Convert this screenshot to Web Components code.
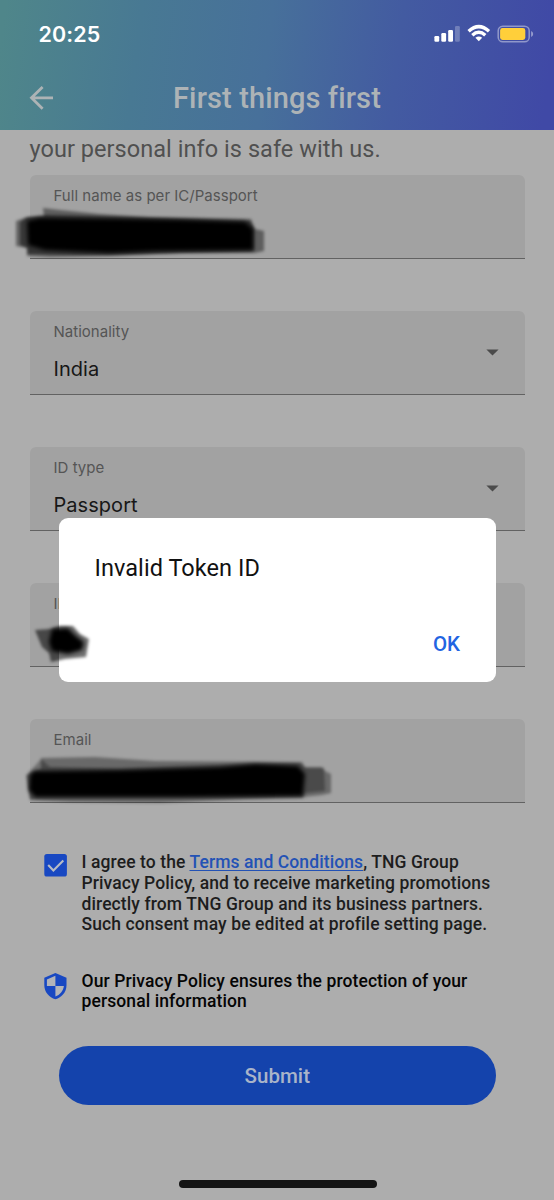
<!DOCTYPE html>
<html lang="en">
<head>
<meta charset="utf-8">
<title>First things first</title>
<style>
html,body{margin:0;padding:0;background:#adadad}
body{width:554px;height:1200px;overflow:hidden;font-family:Roboto,"Liberation Sans",sans-serif}
</style>
</head>
<body>
<registration-page></registration-page>
<script>
const define = (name, html) => customElements.define(name, class extends HTMLElement {
  constructor() {
    super();
    const t = document.createElement('template');
    t.innerHTML = html;
    this.attachShadow({mode: 'open'}).append(t.content.cloneNode(true));
  }
});

define('status-bar', `<style>
:host{display:flex;height:68px;box-sizing:border-box;padding:0 20px 0 38.5px;justify-content:space-between;align-items:center;color:#fff;font:600 21.5px/28px Inter,sans-serif}
.time{letter-spacing:.1px}
svg{display:block}
</style>
<span class="time">20:25</span>
<svg width="100" height="20" viewBox="0 0 100 20">
<g fill="#fff"><rect x="0.4" y="12" width="4.8" height="5.8" rx="1.2"/><rect x="7.3" y="9" width="4.8" height="8.8" rx="1.2"/><rect x="14.2" y="6" width="4.8" height="11.8" rx="1.2"/><rect x="21" y="2" width="4.8" height="15.8" rx="1.2" opacity=".25"/></g>
<g fill="none" stroke="#fff" stroke-width="3.4"><path d="M34.6 7.2Q44.8-2 55 7.2"/><path d="M38.3 11.2Q44.8 5.3 51.3 11.2"/></g><path fill="#fff" d="M41.4 13.8Q44.8 11 48.2 13.8L44.8 17.3Z"/>
<rect x="64.2" y="2.2" width="31" height="15.6" rx="4.6" fill="none" stroke="#fff" stroke-opacity=".42" stroke-width="1.5"/><rect x="66.1" y="4.1" width="25.2" height="11.8" rx="2.4" fill="#ffcf3a"/><path d="M97.1 7.1Q99.2 8 99.2 10T97.1 12.9Z" fill="#fff" opacity=".45"/>
</svg>`);

define('app-header', `<style>
:host{display:block;height:130px;background:linear-gradient(97deg,#4f868a 1%,#487993 25%,#47709a 48%,#435ba1 71%,#4049a6 98%)}
.bar{display:grid;grid-template-columns:52px 1fr 52px;align-items:center;height:60px;padding:0 1px}
svg{display:block;justify-self:end}
h1{margin:0;text-align:center;font-weight:500;font-size:29px;line-height:36px;letter-spacing:.12px;color:#adb3b6}
</style>
<status-bar></status-bar>
<div class="bar"><svg width="24" height="26" viewBox="0 0 24 26" fill="none" stroke="#adb3b5" stroke-width="2.8"><path d="M24 12.8H2.5M13.6 1.9 2.5 12.8 13.6 23.8"/></svg>
<h1><slot></slot></h1></div>`);

define('form-field', `<style>
:host{display:grid;grid-template-columns:1fr auto;box-sizing:border-box;height:84px;margin-bottom:52px;padding:11px 26px 0 24px;background:#a2a2a2;border-bottom:1.5px solid #626262;border-radius:6px 6px 0 0;font-family:Inter,sans-serif}
.label{font-size:15px;line-height:20px;letter-spacing:.02px;color:#555;white-space:nowrap}
.value{margin-top:14px;height:26px;font-size:20px;line-height:26px;letter-spacing:.05px;color:#171717}
.arrow{display:none;align-self:start;margin-top:26.5px}
:host([select]) .arrow{display:block}
</style>
<div><div class="label"><slot name="label"></slot></div><div class="value"><slot></slot></div></div>
<svg class="arrow" width="13" height="7" viewBox="0 0 13 7"><path d="M.4.4h12.2L6.5 6.6Z" fill="#4b4b4b"/></svg>`);

define('check-box', `<style>:host{display:block}svg{display:block}</style>
<svg width="24" height="24" viewBox="0 0 24 24"><rect x=".3" y="0" width="22.6" height="22.6" rx="2.6" fill="#1848c2"/><path d="M4.2 11 9.4 16.4 19.3 6.4" fill="none" stroke="#b7bcc5" stroke-width="2.1"/></svg>`);

define('shield-icon', `<style>:host{display:block}svg{display:block}</style>
<svg width="24" height="28" viewBox="0 0.6 24 28"><path fill="#1848c2" d="M11.4.6.3 5.4v7.3c0 6.9 4.7 12.7 11.1 14.1 6.4-1.4 11.1-7.2 11.1-14.1V5.4Z"/><path fill="#b2b4b9" d="M11.4 3.3V13.7H2.9V7Z M11.4 13.7h8.5c-.6 4.8-4 9.1-8.5 10.5Z"/></svg>`);

define('consent-row', `<style>
:host{display:grid;grid-template-columns:24px 1fr;column-gap:13.5px;padding-left:44px;font-weight:500;font-size:17.5px;line-height:20.8px;letter-spacing:.095px;color:#1d1d1d;white-space:nowrap}
::slotted([slot=icon]){margin-top:2px}
</style><slot name="icon"></slot><div><slot></slot></div>`);

define('pill-button', `<style>
:host{display:flex;align-items:center;justify-content:center;height:59px;border-radius:30px;background:#1443ac;color:#a9b4c9;font-size:20.5px;font-weight:500;letter-spacing:.05px}
</style><slot></slot>`);

define('alert-dialog', `<style>
:host{position:absolute;left:59px;top:518px;width:436.5px;height:164px;box-sizing:border-box;padding:35px 35.5px 0;background:#fff;border-radius:9px;color:#111}
.message{font-size:23.5px;line-height:31px;letter-spacing:.06px}
.actions{display:flex;justify-content:flex-end;margin-top:46px;color:#2264e2;font-weight:500;font-size:20.5px;line-height:28px}
</style><div class="message"><slot></slot></div><div class="actions"><slot name="action"></slot></div>`);

define('marker-strokes', `<style>:host{position:absolute;inset:0;pointer-events:none}svg{display:block}</style>
<svg width="554" height="1200" viewBox="0 0 554 1200">
<defs><filter id="s" x="-5%" y="-15%" width="110%" height="130%"><feGaussianBlur stdDeviation="1.5"/></filter><filter id="h" x="-10%" y="-20%" width="120%" height="140%"><feGaussianBlur stdDeviation="2.1"/></filter></defs>
<g filter="url(#s)">
<path d="M43 208 60 210 100 214 150 217 251 219 255 229 264 231V251L255 253 180 253 110 256 50 257 27 256V248L16 246V221L27 217 44 217Z" fill="#000" opacity=".42"/>
<path d="M27 217 45 215 250 221 254 229V251L150 254 80 255 27 254V248L20 245V222Z" fill="#000" opacity=".45"/>
<path d="M41 758 95 757 155 761 302 762 305 767 322 767 325 771 331 774V793L322 795 303 797 245 799 160 803 70 802 30 800 26 775 41 769Z" fill="#000" opacity=".35"/>
<path d="M41 759 50 767 120 769 220 765 300 763 306 768 324 768 325 791 304 793 303 798 30 799 27 775Z" fill="#000" opacity=".3"/>
<path d="M35 630 50 629 60 626 73 626 80 634 89 639 86 657 65 659 51 662 49 653 42 647Z" fill="#000" opacity=".56"/>
</g>
<g filter="url(#h)" fill="#000">
<path d="M27 221 40 218 120 219 180 220 245 222 253 229 253 250 155 251 110 253 45 250 28 245Z"/>
<path d="M34 771 120 770 220 767 255 764 298 766 305 774 303 796 180 797 35 797 29 790 30 775Z"/>
<path d="M52 629 68 628 76 636 84 642 82 650 68 654 52 651 49 642Z"/>
</g></svg>`);

define('registration-page', `<style>
:host{display:block;position:relative;width:554px;height:1200px;overflow:hidden;background:#adadad}
main{display:flex;flex-direction:column}
.intro{margin:4px 0 0 29.5px;height:41px;font-size:23.5px;line-height:30px;letter-spacing:.05px;color:#505050;white-space:nowrap}
.fields{padding:0 29px 0 29.5px}
.terms{margin-top:-3px}
a{color:#2352b5;text-decoration:underline;text-decoration-thickness:1.3px;text-underline-offset:2px}
.privacy{margin-top:35.5px;color:#050505}
pill-button{margin:34px 58.5px 0 59px}
.home{width:198px;height:8px;border-radius:4px;background:#141414;margin:75px 0 0 178.5px}
</style>
<app-header>First things first</app-header>
<main>
<div class="intro">your personal info is safe with us.</div>
<div class="fields">
<form-field><span slot="label">Full name as per IC/Passport</span></form-field>
<form-field select><span slot="label">Nationality</span>India</form-field>
<form-field select><span slot="label">ID type</span>Passport</form-field>
<form-field><span slot="label">ID</span></form-field>
<form-field><span slot="label">Email</span></form-field>
</div>
<consent-row class="terms"><check-box slot="icon"></check-box>I agree to the <a>Terms and Conditions</a>, TNG Group<br>Privacy Policy, and to receive marketing promotions<br>directly from TNG Group and its business partners.<br>Such consent may be edited at profile setting page.</consent-row>
<consent-row class="privacy"><shield-icon slot="icon"></shield-icon>Our Privacy Policy ensures the protection of your<br>personal information</consent-row>
<pill-button>Submit</pill-button>
<div class="home"></div>
</main>
<alert-dialog>Invalid Token ID<span slot="action">OK</span></alert-dialog>
<marker-strokes></marker-strokes>`);
</script>
</body>
</html>
